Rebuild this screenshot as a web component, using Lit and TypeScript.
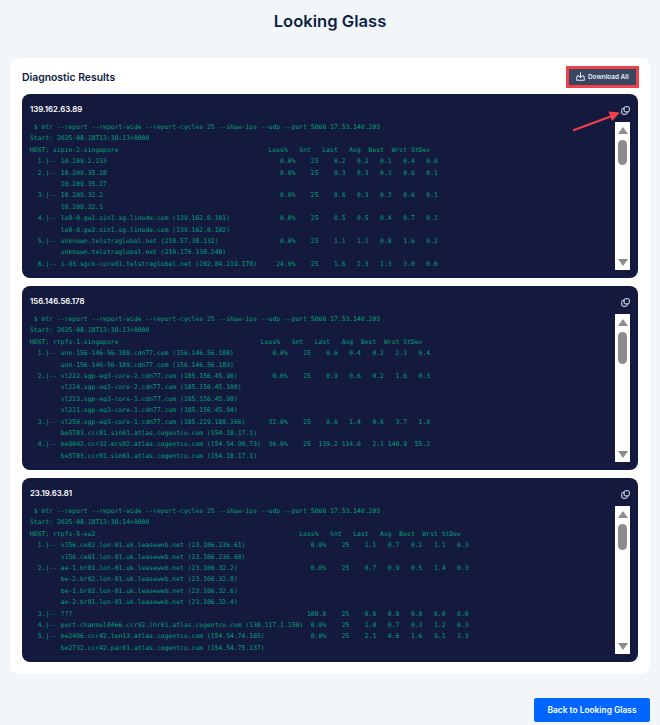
import { LitElement, html, css, svg } from "lit";
import { customElement } from "lit/decorators.js";

type Row = { left: string; nums?: string[]; loss?: string };

const fmt = (left: string, col: number, loss: string, nums: string[]) => {
  const lossEnd = col + 4; // loss column right edge
  const head = left.padEnd(lossEnd - loss.length, " ");
  const rest = nums.map((n) => n.padStart(5, " ")).join(" ");
  return `${head}${loss}    25  ${rest}`;
};

const block = (start: string, host: string, col: number, rows: Row[]) => {
  const lines = [
    " $ mtr --report --report-wide --report-cycles 25 --show-ips --udp --port 5060 37.53.140.203",
    `Start: ${start}`,
    `HOST: ${host}`.padEnd(col - 3, " ") + "Loss%   Snt   Last   Avg  Best  Wrst StDev",
  ];
  for (const r of rows) {
    lines.push(r.nums ? fmt(r.left, col, r.loss ?? "0.0%", r.nums) : r.left);
  }
  return lines;
};

const cont = "        ";

const RESULTS = [
  {
    ip: "139.162.63.89",
    thumb: [18, 25],
    lines: block("2025-08-18T13:38:13+0000", "sipin-2-singapore", 65, [
      { left: "  1.|-- 10.209.2.233", nums: ["0.2", "0.2", "0.1", "0.4", "0.0"] },
      { left: "  2.|-- 10.209.35.28", nums: ["0.3", "0.3", "0.3", "0.6", "0.1"] },
      { left: cont + "10.209.35.27" },
      { left: "  3.|-- 10.209.32.2", nums: ["0.6", "0.3", "0.3", "0.6", "0.1"] },
      { left: cont + "10.209.32.1" },
      { left: "  4.|-- lo0-0.gw1.sin1.sg.linode.com (139.162.0.101)", nums: ["0.5", "0.5", "0.4", "0.7", "0.1"] },
      { left: cont + "lo0-0.gw2.sin1.sg.linode.com (139.162.0.102)" },
      { left: "  5.|-- unknown.telstraglobal.net (210.57.38.132)", nums: ["1.1", "1.1", "0.8", "1.6", "0.2"] },
      { left: cont + "unknown.telstraglobal.net (210.176.138.248)" },
      { left: "  6.|-- i-93.sgcn-core01.telstraglobal.net (202.84.219.178)", loss: "24.0%", nums: ["1.6", "2.3", "1.3", "3.0", "0.6"] },
    ]),
  },
  {
    ip: "156.146.56.178",
    thumb: [18, 32],
    lines: block("2025-08-18T13:38:13+0000", "rtpfs-1-singapore", 63, [
      { left: "  1.|-- unn-156-146-56-188.cdn77.com (156.146.56.188)", nums: ["0.6", "0.4", "0.2", "2.3", "0.4"] },
      { left: cont + "unn-156-146-56-189.cdn77.com (156.146.56.189)" },
      { left: "  2.|-- vl222.sgp-eq3-core-2.cdn77.com (185.156.45.96)", nums: ["0.9", "0.6", "0.2", "1.6", "0.3"] },
      { left: cont + "vl224.sgp-eq3-core-2.cdn77.com (185.156.45.100)" },
      { left: cont + "vl223.sgp-eq3-core-1.cdn77.com (185.156.45.98)" },
      { left: cont + "vl221.sgp-eq3-core-1.cdn77.com (185.156.45.94)" },
      { left: "  3.|-- vl250.sgp-eq3-core-1.cdn77.com (185.229.188.166)", loss: "32.0%", nums: ["0.6", "1.4", "0.6", "3.7", "1.0"] },
      { left: cont + "be5783.ccr81.sin01.atlas.cogentco.com (154.18.17.1)" },
      { left: "  4.|-- be9042.ccr32.mrs02.atlas.cogentco.com (154.54.90.73)", loss: "36.0%", nums: ["139.2", "114.0", "2.1", "140.9", "55.2"] },
      { left: cont + "be5783.ccr81.sin01.atlas.cogentco.com (154.18.17.1)" },
    ]),
  },
  {
    ip: "23.19.63.81",
    thumb: [18, 26],
    lines: block("2025-08-18T13:38:14+0000", "rtpfs-5-eu2", 73, [
      { left: "  1.|-- v156.ce02.lon-01.uk.leaseweb.net (23.106.236.61)", nums: ["1.1", "0.7", "0.2", "1.1", "0.3"] },
      { left: cont + "v156.ce01.lon-01.uk.leaseweb.net (23.106.236.60)" },
      { left: "  2.|-- ae-1.br01.lon-01.uk.leaseweb.net (23.106.32.2)", nums: ["0.7", "0.9", "0.5", "1.4", "0.3"] },
      { left: cont + "be-2.br02.lon-01.uk.leaseweb.net (23.106.32.8)" },
      { left: cont + "be-1.br02.lon-01.uk.leaseweb.net (23.106.32.6)" },
      { left: cont + "ae-2.br01.lon-01.uk.leaseweb.net (23.106.32.4)" },
      { left: "  3.|-- ???", loss: "100.0", nums: ["0.0", "0.0", "0.0", "0.0", "0.0"] },
      { left: "  4.|-- port-channel8466.ccr92.lhr01.atlas.cogentco.com (130.117.1.150)", nums: ["1.0", "0.7", "0.3", "1.2", "0.3"] },
      { left: "  5.|-- be2406.ccr42.lon13.atlas.cogentco.com (154.54.74.165)", nums: ["2.1", "4.6", "1.6", "9.1", "3.3"] },
      { left: cont + "be2732.ccr42.par01.atlas.cogentco.com (154.54.75.137)" },
    ]),
  },
];

const copyIcon = svg`<svg width="9" height="9" viewBox="0 0 10 10" fill="none" stroke="currentColor" stroke-width="1.1" aria-hidden="true">
  <rect x="3.5" y="0.8" width="5.7" height="5.7" rx="1.2"/>
  <path d="M3.5 2.8H2.1A1.2 1.2 0 0 0 0.9 4V8A1.2 1.2 0 0 0 2.1 9.2H5.6A1.2 1.2 0 0 0 6.8 8V6.5"/>
</svg>`;

const downloadIcon = svg`<svg width="9" height="9" viewBox="0 0 10 10" fill="none" stroke="currentColor" stroke-width="1.1" stroke-linecap="round" stroke-linejoin="round" aria-hidden="true">
  <path d="M5 0.7V6"/><path d="M3 4.2L5 6.2L7 4.2"/>
  <path d="M2.6 4.4H1.2L0.6 9.2H9.4L8.8 4.4H7.4"/>
</svg>`;

@customElement("app-root")
export class AppRoot extends LitElement {
  static styles = css`
    :host {
      display: block;
      min-height: 725px;
      box-sizing: border-box;
      background: #f3f6f9;
      padding: 11px 10px 3px;
      font-family: "Inter", "Liberation Sans", sans-serif;
      color: #0c1f45;
    }
    h1 {
      margin: 0;
      height: 47px;
      text-align: center;
      font-size: 16.6px;
      line-height: 21px;
      font-weight: 600;
    }
    .card {
      background: #fff;
      border-radius: 8px;
      padding: 9px 12px 12px;
      display: flex;
      flex-direction: column;
    }
    .head {
      display: flex;
      justify-content: space-between;
      align-items: center;
      height: 19px;
      padding-right: 2px;
      margin-bottom: 8px;
    }
    h2 {
      margin: 2px 0 0;
      font-size: 10.4px;
      font-weight: 600;
    }
    .dl {
      display: inline-flex;
      align-items: center;
      gap: 3px;
      height: 16px;
      width: 67px;
      box-sizing: border-box;
      padding: 0 7px;
      border: 0;
      border-radius: 0;
      background: #374762;
      color: #e6edf5;
      font: 600 6.4px "Inter", "Liberation Sans", sans-serif;
      white-space: nowrap;
      outline: 3px solid #f0404a;
    }
    .results {
      display: flex;
      flex-direction: column;
      gap: 8px;
    }
    .term {
      position: relative;
      background: #141a3e;
      border-radius: 8px;
      height: 184px;
      box-sizing: border-box;
      padding: 0 8px 8px 8px;
      display: flex;
      flex-direction: column;
    }
    .term-head {
      height: 28px;
      flex: none;
      display: flex;
      align-items: center;
      justify-content: space-between;
      padding-top: 2px;
      box-sizing: border-box;
    }
    .ip {
      color: #fff;
      font-size: 7.8px;
      font-weight: 600;
    }
    .copy {
      color: #e8ecf3;
      display: flex;
      margin-top: 2px;
    }
    .body {
      display: flex;
      flex: 1;
      min-height: 0;
    }
    pre {
      flex: 1;
      margin: 0;
      overflow: hidden;
      font-family: "DejaVu Sans Mono", "Liberation Mono", monospace;
      font-size: 6.4px;
      line-height: 11.4px;
      color: #00a078;
    }
    .bar {
      flex: none;
      width: 15px;
      background: #fff;
      display: flex;
      flex-direction: column;
      align-items: center;
      position: relative;
    }
    .arrow {
      width: 0;
      height: 0;
      border-left: 5px solid transparent;
      border-right: 5px solid transparent;
      position: absolute;
    }
    .arrow.up {
      top: 5px;
      border-bottom: 7px solid #8c8c8c;
    }
    .arrow.down {
      bottom: 4px;
      border-top: 7px solid #8c8c8c;
    }
    .thumb {
      width: 9px;
      background: #8c8c8c;
      border-radius: 5px;
    }
    .pointer {
      position: absolute;
      left: 550px;
      top: 14px;
      pointer-events: none;
    }
    .foot {
      display: flex;
      justify-content: flex-end;
      margin-top: 24px;
    }
    .back {
      width: 116px;
      height: 24px;
      border: 0;
      border-radius: 2px;
      background: #0066ff;
      color: #fff;
      font: 600 8.4px "Inter", "Liberation Sans", sans-serif;
      padding: 0;
    }
  `;

  render() {
    return html`
      <h1>Looking Glass</h1>
      <section class="card">
        <div class="head">
          <h2>Diagnostic Results</h2>
          <button class="dl">${downloadIcon}Download All</button>
        </div>
        <div class="results">
          ${RESULTS.map(
            (r, i) => html`
              <article class="term">
                <div class="term-head">
                  <span class="ip">${r.ip}</span>
                  <span class="copy">${copyIcon}</span>
                </div>
                <div class="body">
                  <pre>${r.lines.join("\n")}</pre>
                  <div class="bar">
                    <div class="arrow up"></div>
                    <div class="thumb" style="margin-top:${r.thumb[0]}px;height:${r.thumb[1]}px"></div>
                    <div class="arrow down"></div>
                  </div>
                </div>
                ${i === 0
                  ? svg`<svg class="pointer" width="50" height="24" viewBox="0 0 50 24" fill="none">
                      <path d="M2 22L40 8" stroke="#f0404a" stroke-width="2.2" stroke-linecap="round"/>
                      <path d="M48 4.5L36.5 3.5L40 13Z" fill="#f0404a"/>
                    </svg>`
                  : ""}
              </article>
            `
          )}
        </div>
      </section>
      <div class="foot"><button class="back">Back to Looking Glass</button></div>
    `;
  }
}
